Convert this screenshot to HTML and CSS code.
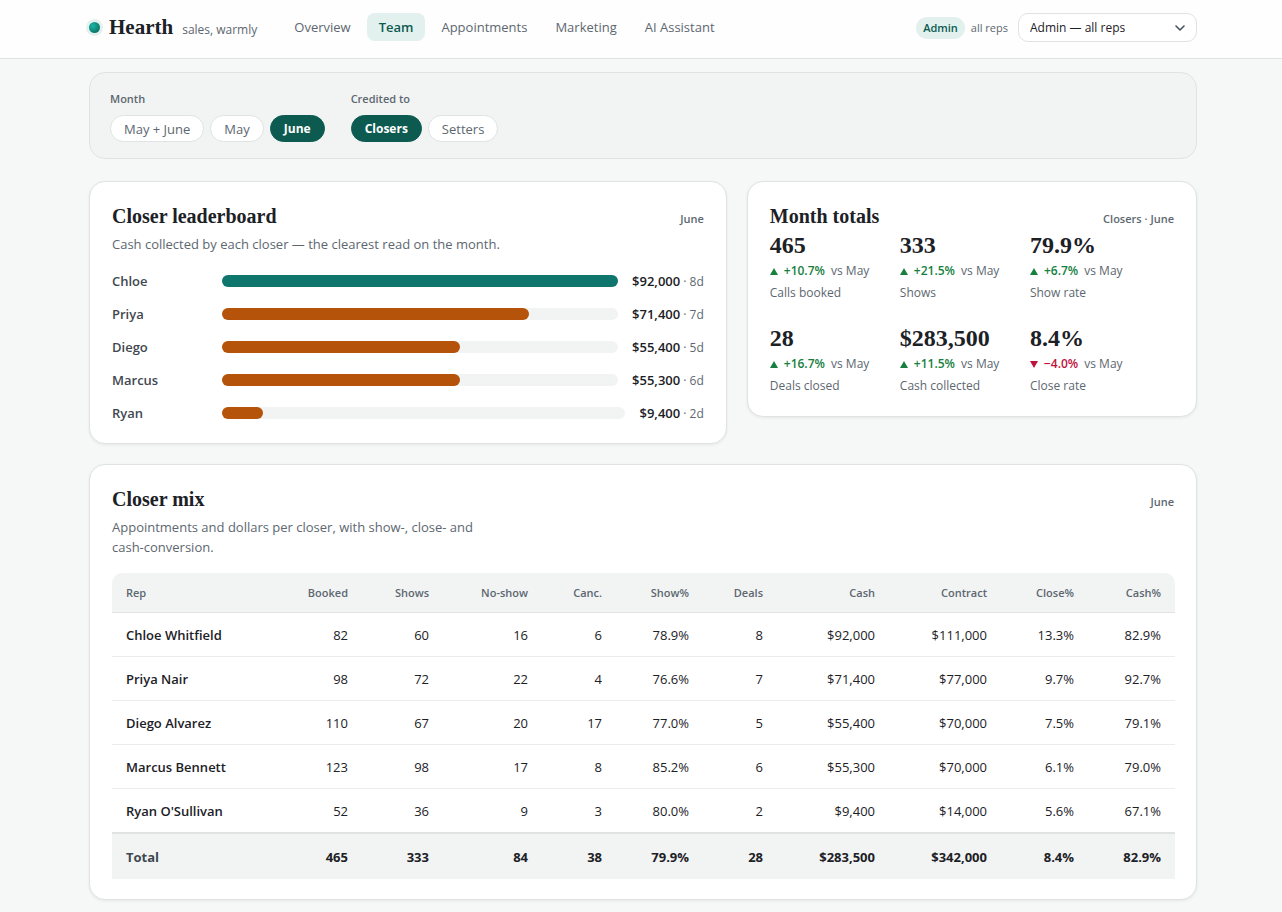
FILE: index.html
```
<!DOCTYPE html>
<html lang="en">
<head>
  <meta charset="UTF-8" />
  <title>Hearth - Team</title>
  <meta name="viewport" content="width=device-width, initial-scale=1" />
  <link rel="stylesheet" href="styles.css">
</head>
<body>

  <header class="topbar">
    <div class="wrap topbar-inner">
      <div class="brand">
        <span class="brand-dot"></span>
        <span class="brand-name">Hearth</span>
        <span class="brand-tag">sales, warmly</span>
      </div>
      <nav class="nav">
        <a href="#overview">Overview</a>
        <a href="#team" class="active">Team</a>
        <a href="#appointments">Appointments</a>
        <a href="#marketing">Marketing</a>
        <a href="#assistant">AI Assistant</a>
      </nav>
      <div class="viewer">
        <span class="role">Admin</span>
        <label class="scope" for="rep">all reps</label>
        <div class="select">
          <select id="rep">
            <option>Admin — all reps</option>
          </select>
          <svg width="10" height="6" viewBox="0 0 10 6" fill="none" stroke="#46505a" stroke-width="1.6" stroke-linecap="round" stroke-linejoin="round"><path d="M1 1l4 4 4-4" /></svg>
        </div>
      </div>
    </div>
  </header>

  <main class="wrap main">

    <!-- Filters -->
    <section class="filters">
      <div class="filter-group">
        <span class="filter-label">Month</span>
        <div class="pills">
          <button type="button">May + June</button>
          <button type="button">May</button>
          <button type="button" class="on">June</button>
        </div>
      </div>
      <div class="filter-group">
        <span class="filter-label">Credited to</span>
        <div class="pills">
          <button type="button" class="on">Closers</button>
          <button type="button">Setters</button>
        </div>
      </div>
    </section>

    <div class="row">
      <!-- Leaderboard -->
      <section class="card">
        <div class="card-head">
          <h2>Closer leaderboard</h2>
          <span class="note">June</span>
        </div>
        <p class="desc">Cash collected by each closer — the clearest read on the month.</p>
        <div class="bars">
          <div class="bar-row">
            <span class="bar-name">Chloe</span>
            <div class="track"><div class="fill lead" style="width: 100%"></div></div>
            <span class="bar-value">$92,000<small> · 8d</small></span>
          </div>
          <div class="bar-row">
            <span class="bar-name">Priya</span>
            <div class="track"><div class="fill" style="width: 77.6%"></div></div>
            <span class="bar-value">$71,400<small> · 7d</small></span>
          </div>
          <div class="bar-row">
            <span class="bar-name">Diego</span>
            <div class="track"><div class="fill" style="width: 60.2%"></div></div>
            <span class="bar-value">$55,400<small> · 5d</small></span>
          </div>
          <div class="bar-row">
            <span class="bar-name">Marcus</span>
            <div class="track"><div class="fill" style="width: 60.1%"></div></div>
            <span class="bar-value">$55,300<small> · 6d</small></span>
          </div>
          <div class="bar-row">
            <span class="bar-name">Ryan</span>
            <div class="track"><div class="fill" style="width: 10.2%"></div></div>
            <span class="bar-value">$9,400<small> · 2d</small></span>
          </div>
        </div>
      </section>

      <!-- Totals -->
      <section class="card">
        <div class="card-head">
          <h2>Month totals</h2>
          <span class="note">Closers · June</span>
        </div>
        <div class="stats">
          <div class="stat">
            <div class="num">465</div>
            <div class="delta"><i class="up"></i><b>+10.7%</b> vs May</div>
            <div class="stat-label">Calls booked</div>
          </div>
          <div class="stat">
            <div class="num">333</div>
            <div class="delta"><i class="up"></i><b>+21.5%</b> vs May</div>
            <div class="stat-label">Shows</div>
          </div>
          <div class="stat">
            <div class="num">79.9%</div>
            <div class="delta"><i class="up"></i><b>+6.7%</b> vs May</div>
            <div class="stat-label">Show rate</div>
          </div>
          <div class="stat">
            <div class="num">28</div>
            <div class="delta"><i class="up"></i><b>+16.7%</b> vs May</div>
            <div class="stat-label">Deals closed</div>
          </div>
          <div class="stat">
            <div class="num">$283,500</div>
            <div class="delta"><i class="up"></i><b>+11.5%</b> vs May</div>
            <div class="stat-label">Cash collected</div>
          </div>
          <div class="stat">
            <div class="num">8.4%</div>
            <div class="delta worse"><i class="down"></i><b>−4.0%</b> vs May</div>
            <div class="stat-label">Close rate</div>
          </div>
        </div>
      </section>
    </div>

    <!-- Mix table -->
    <section class="card">
      <div class="card-head">
        <h2>Closer mix</h2>
        <span class="note">June</span>
      </div>
      <p class="desc narrow">Appointments and dollars per closer, with show-, close- and cash-conversion.</p>
      <table class="mix">
        <colgroup>
          <col class="c-rep"><col class="c-booked"><col class="c-shows"><col class="c-noshow"><col class="c-canc"><col class="c-pct"><col class="c-deals"><col class="c-money"><col class="c-money"><col class="c-pct"><col class="c-pct">
        </colgroup>
        <thead>
          <tr><th>Rep</th><th>Booked</th><th>Shows</th><th>No-show</th><th>Canc.</th><th>Show%</th><th>Deals</th><th>Cash</th><th>Contract</th><th>Close%</th><th>Cash%</th></tr>
        </thead>
        <tbody>
          <tr><td>Chloe Whitfield</td><td>82</td><td>60</td><td>16</td><td>6</td><td>78.9%</td><td>8</td><td>$92,000</td><td>$111,000</td><td>13.3%</td><td>82.9%</td></tr>
          <tr><td>Priya Nair</td><td>98</td><td>72</td><td>22</td><td>4</td><td>76.6%</td><td>7</td><td>$71,400</td><td>$77,000</td><td>9.7%</td><td>92.7%</td></tr>
          <tr><td>Diego Alvarez</td><td>110</td><td>67</td><td>20</td><td>17</td><td>77.0%</td><td>5</td><td>$55,400</td><td>$70,000</td><td>7.5%</td><td>79.1%</td></tr>
          <tr><td>Marcus Bennett</td><td>123</td><td>98</td><td>17</td><td>8</td><td>85.2%</td><td>6</td><td>$55,300</td><td>$70,000</td><td>6.1%</td><td>79.0%</td></tr>
          <tr><td>Ryan O'Sullivan</td><td>52</td><td>36</td><td>9</td><td>3</td><td>80.0%</td><td>2</td><td>$9,400</td><td>$14,000</td><td>5.6%</td><td>67.1%</td></tr>
        </tbody>
        <tfoot>
          <tr><td>Total</td><td>465</td><td>333</td><td>84</td><td>38</td><td>79.9%</td><td>28</td><td>$283,500</td><td>$342,000</td><td>8.4%</td><td>82.9%</td></tr>
        </tfoot>
      </table>
    </section>

  </main>

</body>
</html>
```
FILE: styles.css
```
:root {
  --ink: #1c2126;
  --ink-2: #3f4850;
  --muted: #5d6770;
  --line: #dfe3e4;
  --soft: #f2f4f4;
  --teal: #0f766e;
  --teal-dark: #0d5a51;
  --teal-soft: #e2f1ee;
  --amber: #b45309;
  --sans: "Segoe UI", "Open Sans", "Noto Sans", sans-serif;
  --serif: "Palatino Linotype", Palatino, "Liberation Serif", serif;
}

* { box-sizing: border-box; }

body {
  margin: 0;
  background: #f6f8f8;
  color: var(--ink);
  font: 13px/20px var(--sans);
}

button, select { font: inherit; }

.wrap {
  max-width: 1112px;
  margin: 0 auto;
  padding-left: 4px;
}

/* Top bar */
.topbar {
  background: #fefefe;
  border-bottom: 1px solid var(--line);
  padding: 13px 0 16px;
}

.topbar-inner {
  display: flex;
  align-items: flex-start;
}

.brand {
  display: flex;
  align-items: baseline;
}

.brand-dot {
  align-self: center;
  width: 11px;
  height: 11px;
  margin-right: 9px;
  border-radius: 50%;
  background: radial-gradient(circle at 35% 35%, #14b8a6, #0d5a51);
  box-shadow: 0 0 0 3px var(--teal-soft);
}

.brand-name {
  font: bold 21px/28px var(--serif);
}

.brand-tag {
  margin-left: 9px;
  font-size: 12px;
  color: var(--muted);
}

.nav {
  display: flex;
  gap: 4px;
  margin-left: 25px;
}

.nav a {
  padding: 4px 12px;
  border-radius: 8px;
  color: var(--muted);
  text-decoration: none;
}

.nav a.active {
  background: var(--teal-soft);
  color: var(--teal-dark);
  font-weight: 600;
}

.viewer {
  display: flex;
  align-items: center;
  margin-left: auto;
}

.role {
  padding: 1px 7px;
  border-radius: 11px;
  background: var(--teal-soft);
  color: var(--teal-dark);
  font-size: 11px;
  font-weight: 600;
}

.scope {
  margin: 0 10px 0 6px;
  font-size: 11px;
  color: var(--muted);
}

.select {
  display: grid;
  align-items: center;
  width: 179px;
}

.select select, .select svg { grid-area: 1 / 1; }

.select select {
  appearance: none;
  width: 100%;
  height: 29px;
  padding: 0 28px 0 11px;
  border: 1px solid var(--line);
  border-radius: 10px;
  background: #fff;
  color: var(--ink);
  font-size: 12px;
}

.select svg {
  justify-self: end;
  margin-right: 12px;
  pointer-events: none;
}

.main {
  display: flex;
  flex-direction: column;
  gap: 20px;
  padding-top: 13px;
  padding-bottom: 12px;
}

/* Filters */
.filters {
  display: flex;
  gap: 26px;
  margin-bottom: 2px;
  padding: 16px 20px;
  border: 1px solid var(--line);
  border-radius: 16px;
  background: var(--soft);
}

.filter-label {
  display: block;
  margin-bottom: 6px;
  font-size: 11px;
  font-weight: 600;
  color: var(--muted);
}

.pills {
  display: flex;
  gap: 6px;
}

.pills button {
  height: 27px;
  padding: 0 13px;
  border: 1px solid var(--line);
  border-radius: 14px;
  background: #fff;
  color: var(--muted);
}

.pills button.on {
  border-color: var(--teal-dark);
  background: var(--teal-dark);
  color: #fff;
  font-size: 12px;
  font-weight: 700;
}

/* Cards */
.row {
  display: grid;
  grid-template-columns: 17fr 12fr;
  align-items: start;
  gap: 20px;
}

.card {
  padding: 20px 22px;
  border: 1px solid var(--line);
  border-radius: 16px;
  background: #fff;
  box-shadow: 0 1px 3px rgba(28, 33, 38, 0.08);
}

.card-head {
  display: flex;
  justify-content: space-between;
  align-items: baseline;
}

h2 {
  margin: 0;
  font: bold 20px/28px var(--serif);
}

.note {
  font-size: 11px;
  font-weight: 600;
  color: var(--muted);
}

.desc {
  margin: 4px 0 0;
  color: var(--muted);
}

.desc.narrow { max-width: 390px; }

/* Leaderboard bars */
.bars {
  display: grid;
  gap: 13px;
  margin-top: 17px;
}

.bar-row {
  display: grid;
  grid-template-columns: 96px 1fr auto;
  align-items: center;
  gap: 14px;
}

.bar-name {
  font-weight: 600;
  color: var(--ink-2);
}

.track {
  height: 12px;
  border-radius: 6px;
  background: var(--soft);
}

.fill {
  height: 100%;
  border-radius: 6px;
  background: var(--amber);
}

.fill.lead { background: var(--teal); }

.bar-value { font-weight: 600; }

.bar-value small {
  font-size: 12px;
  line-height: 1;
  font-weight: 400;
  color: var(--muted);
}

/* Month totals */
.stats {
  display: grid;
  grid-template-columns: repeat(3, 1fr);
  row-gap: 20px;
  padding-right: 14px;
}

.num {
  font: bold 24px/30px var(--serif);
}

.delta {
  margin-top: 1px;
  font-size: 12px;
  color: var(--muted);
}

.delta b {
  margin-right: 3px;
  font-weight: 600;
  color: #15803d;
}

.delta.worse b { color: #be123c; }

.delta i {
  display: inline-block;
  margin-right: 6px;
  border: 4px solid transparent;
}

.delta .up {
  border-top: 0;
  border-bottom: 7px solid #15803d;
}

.delta .down {
  border-bottom: 0;
  border-top: 7px solid #be123c;
}

.stat-label {
  margin-top: 2px;
  font-size: 12px;
  color: var(--muted);
}

/* Mix table */
.mix {
  width: 100%;
  margin-top: 16px;
  table-layout: fixed;
  border-collapse: separate;
  border-spacing: 0;
}

.c-rep { width: 169px; }
.c-booked, .c-shows { width: 81px; }
.c-noshow { width: 99px; }
.c-canc, .c-deals { width: 74px; }
.c-pct { width: 87px; }
.c-money { width: 112px; }

.mix th, .mix td {
  padding: 0 14px;
  text-align: right;
}

.mix th:first-child, .mix td:first-child {
  text-align: left;
  font-weight: 600;
}

.mix th {
  height: 40px;
  border-bottom: 1px solid var(--line);
  background: var(--soft);
  font-size: 11px;
  font-weight: 600;
  color: var(--muted);
}

.mix th:first-child { border-top-left-radius: 10px; }
.mix th:last-child { border-top-right-radius: 10px; }

.mix td {
  height: 44px;
  border-bottom: 1px solid #eaeded;
}

.mix tbody tr:last-child td {
  height: 43px;
  border-bottom: 0;
}

.mix tfoot td {
  height: 47px;
  border-top: 2px solid var(--line);
  border-bottom: 0;
  background: var(--soft);
  font-weight: 700;
}

.mix tfoot td:first-child {
  font-weight: 700;
  color: var(--ink-2);
}
```
